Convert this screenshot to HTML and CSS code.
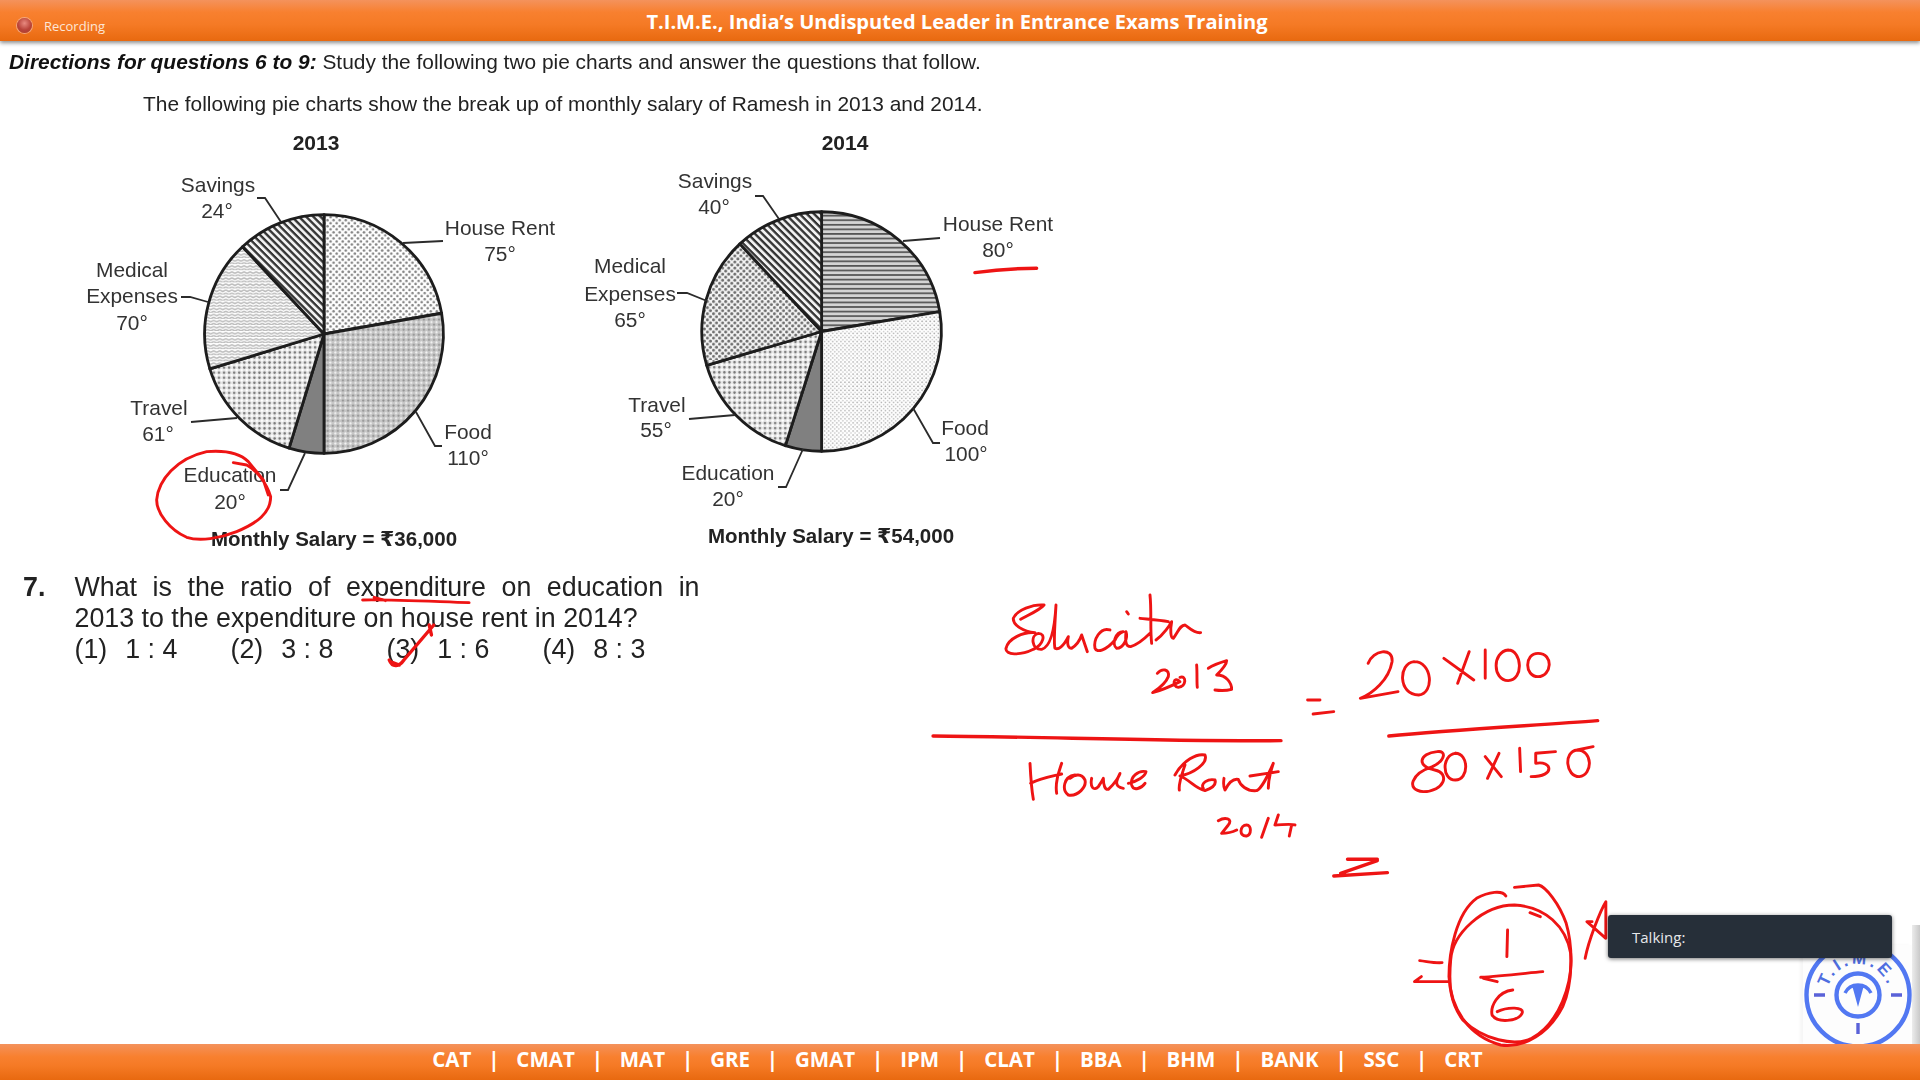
FILE: index.html
```html
<!DOCTYPE html>
<html lang="en">
<head>
<meta charset="utf-8">
<title>T.I.M.E. Recording</title>
<link rel="stylesheet" href="styles.css">
</head>
<body>
<div class="page">
  <header class="topbar">
    <div class="rec"><span class="rec-dot"></span><span>Recording</span></div>
    <div class="title">T.I.M.E., India’s Undisputed Leader in Entrance Exams Training</div>
    <div></div>
  </header>

  <main class="slide">
    <p class="directions"><b><i>Directions for questions 6 to 9:</i></b> Study the following two pie charts and answer the questions that follow.</p>
    <p class="intro">The following pie charts show the break up of monthly salary of Ramesh in 2013 and 2014.</p>

    <div class="charts">
      <svg class="chart" width="500" height="435" viewBox="60 125 500 435">
        <defs>
          <pattern id="dotsA" width="6" height="6" patternUnits="userSpaceOnUse"><rect width="6" height="6" fill="#fff"/><circle cx="1.5" cy="1.5" r="1.3" fill="#858585"/><circle cx="4.5" cy="4.5" r="1.3" fill="#858585"/></pattern>
          <pattern id="dotsFood" width="5" height="5" patternUnits="userSpaceOnUse"><rect width="5" height="5" fill="#c6c6c6"/><circle cx="1.2" cy="1.2" r="1" fill="#f4f4f4"/><circle cx="3.7" cy="3.7" r="1" fill="#8f8f8f"/></pattern>
          <pattern id="dotsMed" width="6" height="6" patternUnits="userSpaceOnUse"><rect width="6" height="6" fill="#fff"/><path d="M0 1.5 3 3 6 1.5M0 4.5 3 6 6 4.5" fill="none" stroke="#bbb" stroke-width="1.5"/></pattern>
          <pattern id="dotsTrav" width="5" height="5" patternUnits="userSpaceOnUse"><rect width="5" height="5" fill="#e6e6e6"/><circle cx="1.2" cy="1.2" r="1.2" fill="#777"/><circle cx="3.7" cy="3.7" r="1.2" fill="#fff"/></pattern>
          <pattern id="hatch" width="5" height="5" patternUnits="userSpaceOnUse" patternTransform="rotate(45)"><rect width="5" height="5" fill="#f2f2f2"/><rect width="5" height="2.3" fill="#333"/></pattern>
          <pattern id="lines" width="4.5" height="4.5" patternUnits="userSpaceOnUse"><rect width="4.5" height="4.5" fill="#d4d4d4"/><rect width="4.5" height="1.7" fill="#555"/></pattern>
          <pattern id="fine" width="4" height="4" patternUnits="userSpaceOnUse"><rect width="4" height="4" fill="#fff"/><circle cx="1" cy="1" r=".8" fill="#a8a8a8"/><circle cx="3" cy="3" r=".8" fill="#c8c8c8"/></pattern>
          <pattern id="dotsDark" width="6" height="6" patternUnits="userSpaceOnUse"><rect width="6" height="6" fill="#f4f4f4"/><circle cx="1.5" cy="1.5" r="1.5" fill="#6f6f6f"/><circle cx="4.5" cy="4.5" r="1.5" fill="#6f6f6f"/></pattern>
        </defs>
        <text class="t-year" x="316" y="150">2013</text>
        <g transform="translate(324 334) scale(1.012) translate(-325 -333)">
          <path class="slice" fill="url(#dotsA)" d="M325 333V215A118 118 0 0 1 441.2 312.5Z"/>
          <path class="slice" fill="url(#dotsFood)" d="M325 333L441.2 312.5A118 118 0 0 1 325 451Z"/>
          <path class="slice" fill="#808080" d="M325 333V451A118 118 0 0 1 290.5 445.8Z"/>
          <path class="slice" fill="url(#dotsTrav)" d="M325 333L290.5 445.8A118 118 0 0 1 212.2 367.5Z"/>
          <path class="slice" fill="url(#dotsMed)" d="M325 333L212.2 367.5A118 118 0 0 1 244.5 246.7Z"/>
          <path class="slice" fill="url(#hatch)" d="M325 333L244.5 246.7A118 118 0 0 1 325 215Z"/>
        </g>
        <path class="leader" d="M257 198H265L281 222M403 243L443 241M181 297H190L208 302M191 422L237 418M416 412L435 446H442M305 453L288 490H280"/>
        <text class="t-label" x="218" y="192">Savings</text><text class="t-label" x="217" y="218">24°</text>
        <text class="t-label" x="500" y="235">House Rent</text><text class="t-label" x="500" y="261">75°</text>
        <text class="t-label" x="132" y="277">Medical</text><text class="t-label" x="132" y="303">Expenses</text><text class="t-label" x="132" y="330">70°</text>
        <text class="t-label" x="159" y="415">Travel</text><text class="t-label" x="158" y="441">61°</text>
        <text class="t-label" x="468" y="439">Food</text><text class="t-label" x="468" y="465">110°</text>
        <text class="t-label" x="230" y="482">Education</text><text class="t-label" x="230" y="509">20°</text>
        <text class="t-salary" x="334" y="546">Monthly Salary = ₹36,000</text>
      </svg>
      <svg class="chart" width="500" height="435" viewBox="560 125 500 435">
        <text class="t-year" x="845" y="150">2014</text>
        <g transform="translate(821.6 331.5) scale(1.015) translate(-822 -331)">
          <path class="slice" fill="url(#lines)" d="M822 331V213A118 118 0 0 1 938.4 311.5Z"/>
          <path class="slice" fill="url(#fine)" d="M822 331L938.4 311.5A118 118 0 0 1 822 449Z"/>
          <path class="slice" fill="#808080" d="M822 331V449A118 118 0 0 1 786.3 443.5Z"/>
          <path class="slice" fill="url(#dotsTrav)" d="M822 331L786.3 443.5A118 118 0 0 1 708.8 364.3Z"/>
          <path class="slice" fill="url(#dotsDark)" d="M822 331L708.8 364.3A118 118 0 0 1 741.5 244.7Z"/>
          <path class="slice" fill="url(#hatch)" d="M822 331L741.5 244.7A118 118 0 0 1 822 213Z"/>
        </g>
        <path class="leader" d="M755 196H763L779 219M903 241L940 238M677 293H687L707 301M689 419L735 415M913 408L933 443H940M803 449L786 487H778"/>
        <text class="t-label" x="715" y="188">Savings</text><text class="t-label" x="714" y="214">40°</text>
        <text class="t-label" x="998" y="231">House Rent</text><text class="t-label" x="998" y="257">80°</text>
        <text class="t-label" x="630" y="273">Medical</text><text class="t-label" x="630" y="301">Expenses</text><text class="t-label" x="630" y="327">65°</text>
        <text class="t-label" x="657" y="412">Travel</text><text class="t-label" x="656" y="437">55°</text>
        <text class="t-label" x="965" y="435">Food</text><text class="t-label" x="966" y="461">100°</text>
        <text class="t-label" x="728" y="480">Education</text><text class="t-label" x="728" y="506">20°</text>
        <text class="t-salary" x="831" y="543">Monthly Salary = ₹54,000</text>
      </svg>
    </div>

    <section class="question">
      <div class="q-num">7.</div>
      <div class="q-body">
        <p class="q-text">What is the ratio of expenditure on education in 2013 to the expenditure on house rent in 2014?</p>
        <div class="options">
          <div class="option"><span>(1)</span><span>1 : 4</span></div>
          <div class="option"><span>(2)</span><span>3 : 8</span></div>
          <div class="option"><span>(3)</span><span>1 : 6</span></div>
          <div class="option"><span>(4)</span><span>8 : 3</span></div>
        </div>
      </div>
    </section>
  </main>

  <footer class="bottombar">
    <span>CAT</span><i>|</i><span>CMAT</span><i>|</i><span>MAT</span><i>|</i><span>GRE</span><i>|</i><span>GMAT</span><i>|</i><span>IPM</span><i>|</i><span>CLAT</span><i>|</i><span>BBA</span><i>|</i><span>BHM</span><i>|</i><span>BANK</span><i>|</i><span>SSC</span><i>|</i><span>CRT</span>
  </footer>

  <svg class="ink" width="1920" height="1080" viewBox="0 0 1920 1080">
    <g transform="translate(60 130) scale(.3333)">
      <path d="M520 998L560 1005C590 1020 620 1060 632 1100C632 1150 590 1180 530 1205C480 1225 420 1235 380 1222C330 1200 290 1150 290 1110C295 1050 350 985 440 965C500 960 540 970 565 995L610 1050L625 1095"/>
    </g>
    <g transform="translate(560 130) scale(.3333)">
      <path class="thick" d="M1245 428C1300 420 1370 415 1430 415"/>
    </g>
    <g transform="translate(0 560) scale(.459 .3333)">
      <path d="M790 120C850 118 950 125 1022 128M815 112L840 122"/>
      <path class="thick" d="M848 300C855 325 870 320 880 300L945 195M935 195L940 225M850 305L870 315"/>
    </g>
    <g transform="translate(1000 590) scale(.3333)">
      <path d="M62 88C85 75 120 60 132 45C100 42 50 60 40 85C38 105 70 125 105 128C70 125 25 145 18 175C15 195 60 198 100 178C130 165 140 130 115 130C90 135 95 180 125 178C155 170 165 100 168 45C165 100 160 160 165 175C175 180 190 170 205 140C200 165 205 175 215 175C230 165 240 150 245 135L262 185"/>
      <path d="M330 120C300 110 280 150 285 175C290 190 320 180 345 150C350 140 360 128 370 125C345 125 335 165 350 175C370 175 385 145 378 125C376 150 375 170 392 170C410 165 430 150 450 130M380 65L385 72M450 15C455 60 450 120 455 160M420 85C450 88 480 90 505 95M468 150C490 135 510 105 515 95C510 120 512 145 520 145C535 125 540 105 555 105C565 110 580 130 602 128"/>
      <path d="M472 250C485 235 510 235 505 260C495 285 470 300 458 308C490 300 520 285 540 275C520 255 515 290 535 292C560 290 560 255 540 262M590 225C592 250 590 280 592 292M625 235C640 225 670 215 680 212C680 225 655 250 650 255C680 255 695 280 695 298C680 302 660 302 645 300"/>
    </g>
    <g transform="translate(1020 750) scale(.3333)">
      <path d="M30 40C32 80 35 120 40 148M32 100C60 85 90 80 125 72M125 40C115 70 105 100 110 130M165 75C130 80 125 120 145 135C175 140 200 110 195 90C185 70 165 72 150 85M215 85C210 110 220 125 235 110C245 95 250 85 250 85C250 105 255 120 265 118C285 100 300 75 300 70C290 90 280 110 310 115M325 100C350 95 375 80 378 65C355 60 330 80 335 105C340 125 365 115 375 100"/>
      <path d="M495 45C485 75 475 100 478 120M465 75C490 30 530 10 555 15C565 40 520 70 480 78C510 90 525 115 555 122C575 115 590 105 585 90C565 85 540 100 550 115M612 85C610 100 612 115 615 120C625 100 640 85 655 88C660 105 680 125 710 122C725 115 740 85 760 40C750 70 745 100 745 115M690 78L775 65"/>
      <path d="M595 212C615 200 640 205 625 225L605 250C620 250 640 245 650 240M680 225C660 225 655 260 680 258C695 255 695 225 680 225M745 205L725 262M775 195L765 225C785 225 810 220 825 225M815 225L808 258"/>
    </g>
    <g transform="translate(900 570) scale(.459 .3333)">
      <path class="thick" d="M72 498C300 500 600 515 830 512M1065 498C1200 480 1400 465 1520 452"/>
      <path d="M888 390L915 390M900 432L945 425"/>
      <path d="M1020 280C1030 240 1075 230 1072 275C1065 330 1030 370 1003 385L1085 365M1120 275C1085 280 1085 375 1130 375C1165 370 1160 275 1120 275M1185 265L1250 330M1240 245L1215 340M1275 240L1275 325M1325 240C1290 245 1290 330 1325 332C1360 330 1355 240 1325 240M1390 250C1360 250 1360 320 1390 320C1420 320 1425 250 1390 250"/>
      <path d="M1170 545C1130 550 1125 590 1165 600C1200 610 1185 665 1140 665C1100 660 1115 610 1160 590C1190 570 1190 540 1170 545M1210 550C1180 555 1180 630 1210 630C1240 630 1240 550 1210 550M1275 560L1310 620M1305 550L1280 625M1350 535L1352 605M1428 545L1385 550L1385 580C1420 570 1430 620 1375 620M1475 540C1445 545 1450 620 1480 620C1510 615 1510 540 1475 540L1510 530"/>
      <path class="thick" d="M975 868L1040 868M1040 872L960 910M945 918L1062 908"/>
    </g>
    <g transform="translate(1380 860) scale(.3448 .3333)">
      <path d="M115 302C140 305 160 310 180 308M120 350L100 365L200 365"/>
      <path d="M365 108C355 90 315 95 280 115C220 160 200 280 200 350C205 450 260 530 350 555C420 565 490 520 530 440C560 370 560 260 540 190C520 130 480 80 460 75L390 82"/>
      <path d="M205 300C210 220 300 135 390 135C480 140 540 200 553 280C560 370 520 490 440 535C390 560 300 540 240 480C205 430 198 380 205 300M435 158L465 170"/>
      <path d="M370 210L368 290M292 352C350 348 420 340 472 335M300 355L340 365M385 390C340 395 320 440 325 465C340 490 400 485 412 460C420 440 370 440 340 455"/>
      <path d="M595 295C605 240 640 150 655 125L655 235L600 185L615 185"/>
    </g>
  </svg>

  <div class="logo-shade"></div>
  <div class="logo">
    <svg width="110" height="100" viewBox="0 0 110 100">
      <defs><path id="logoArc" d="M24 50A31 31 0 0 1 86 50"/></defs>
      <circle class="logo-ring" cx="55" cy="50" r="51.5"/>
      <circle class="logo-ring" cx="55" cy="50" r="21.5"/>
      <path class="logo-arch" d="M42 48A14.5 14.5 0 0 1 68 48"/>
      <path class="logo-wedge" d="M49 40H61L55 62Z"/>
      <path class="logo-dash" d="M11 50H22M88 50H99M55 78V89"/>
      <text class="logo-text"><textPath href="#logoArc" startOffset="50%">T.I.M.E.</textPath></text>
    </svg>
  </div>

  <div class="talking">Talking:</div>
</div>
</body>
</html>
```

FILE: styles.css
```css
* { box-sizing: border-box; }
html, body { margin: 0; padding: 0; background: #fff; }
.page {
  position: relative;
  width: 1920px;
  height: 1080px;
  display: flex;
  flex-direction: column;
  overflow: hidden;
  font-family: "Liberation Sans", Arial, sans-serif;
  color: #222;
}

.topbar {
  height: 41px;
  flex: none;
  display: grid;
  grid-template-columns: 1fr auto 1fr;
  padding: 0 23px 0 17px;
  background: linear-gradient(#f4925c 0, #f8802f 30%, #f57a25 60%, #e8690f 100%);
  box-shadow: 0 2px 4px rgba(0, 0, 0, .45);
  position: relative;
  z-index: 2;
  font-family: "Open Sans", sans-serif;
  color: #fff;
}
.rec {
  display: flex;
  align-items: center;
  gap: 12px;
  padding-top: 9px;
  font-size: 13px;
  color: #fde6d6;
}
.rec-dot {
  width: 15px;
  height: 15px;
  border-radius: 50%;
  background: radial-gradient(circle at 50% 35%, #e88a80 0, #b8433a 55%, #a8402f 100%);
  box-shadow: 0 0 0 1px #f2a67e;
}
.title {
  font-weight: 700;
  font-size: 20.1px;
  line-height: 40px;
  padding-top: 2px;
  white-space: nowrap;
}

.slide {
  flex: 1;
  min-height: 0;
  padding-left: 9px;
  filter: blur(.45px);
}
.directions {
  margin: 9px 0 0;
  font-size: 20.9px;
  line-height: 24px;
  white-space: nowrap;
}
.directions b { color: #111; }
.intro {
  margin: 18px 0 0 134px;
  font-size: 20.9px;
  line-height: 24px;
  white-space: nowrap;
}
.charts {
  display: flex;
  margin: 9px 0 0 51px;
}
.chart { display: block; flex: none; }
.slice { stroke: #1d1d1d; stroke-width: 2.8; stroke-linejoin: round; }
.leader { fill: none; stroke: #2b2b2b; stroke-width: 1.8; }
.t-year, .t-label, .t-salary {
  font-family: "Liberation Sans", "DejaVu Sans", sans-serif;
  text-anchor: middle;
}
.t-year { font-size: 21px; font-weight: 700; fill: #222; }
.t-label { font-size: 20.9px; fill: #333; }
.t-salary { font-size: 20.5px; font-weight: 700; fill: #222; }

.question {
  display: flex;
  margin: 12px 0 0 14px;
  font-size: 26.8px;
  line-height: 31px;
}
.q-num { width: 51.5px; flex: none; font-weight: 700; }
.q-body { width: 625px; }
.q-text { margin: 0; text-align: justify; }
.options { display: grid; grid-template-columns: repeat(4, 156px); }
.option { display: flex; gap: 18px; }

.bottombar {
  height: 36px;
  flex: none;
  display: flex;
  justify-content: center;
  align-items: center;
  gap: 21px;
  padding: 0 5px 6px 0;
  background: linear-gradient(#f4925c 0, #f8802f 35%, #f57a25 60%, #e8690f 100%);
  position: relative;
  z-index: 2;
  font-family: "Open Sans", sans-serif;
  font-weight: 700;
  font-size: 20.5px;
  color: #fff;
}
.bottombar i {
  width: 3px;
  display: flex;
  justify-content: center;
  font-style: normal;
}

.ink {
  position: absolute;
  top: 0;
  left: 0;
  z-index: 3;
  pointer-events: none;
}
.ink path {
  fill: none;
  stroke: #ee1414;
  stroke-width: 2.9;
  stroke-linecap: round;
  stroke-linejoin: round;
  vector-effect: non-scaling-stroke;
}
.ink path.thick { stroke-width: 3.4; }

.logo-shade {
  position: absolute;
  right: 0;
  top: 925px;
  width: 8px;
  height: 119px;
  background: linear-gradient(90deg, #ececec, #c9c9c9);
}
.logo {
  position: absolute;
  left: 1803px;
  top: 945px;
  width: 109px;
  height: 99px;
  background: #fdfdfd;
  box-shadow: -3px 0 3px #f6f6f6;
}
.logo svg { display: block; overflow: visible; }
.logo-ring { fill: none; stroke: #5278f2; stroke-width: 4.4; }
.logo-arch { fill: none; stroke: #5278f2; stroke-width: 3.5; }
.logo-wedge { fill: #5278f2; }
.logo-dash { fill: none; stroke: #5a62d8; stroke-width: 3.4; }
.logo-text {
  font-family: "Liberation Sans", sans-serif;
  font-size: 17px;
  font-weight: 700;
  letter-spacing: 3px;
  text-anchor: middle;
  fill: #4f6ee0;
}

.talking {
  position: absolute;
  left: 1608px;
  top: 915px;
  width: 284px;
  height: 43px;
  padding-left: 24px;
  display: flex;
  align-items: center;
  border-radius: 3px;
  background: #262f39;
  box-shadow: 0 1px 4px rgba(0, 0, 0, .55);
  z-index: 4;
  font-family: "Open Sans", sans-serif;
  font-size: 15px;
  color: #e6e8ea;
}
```
